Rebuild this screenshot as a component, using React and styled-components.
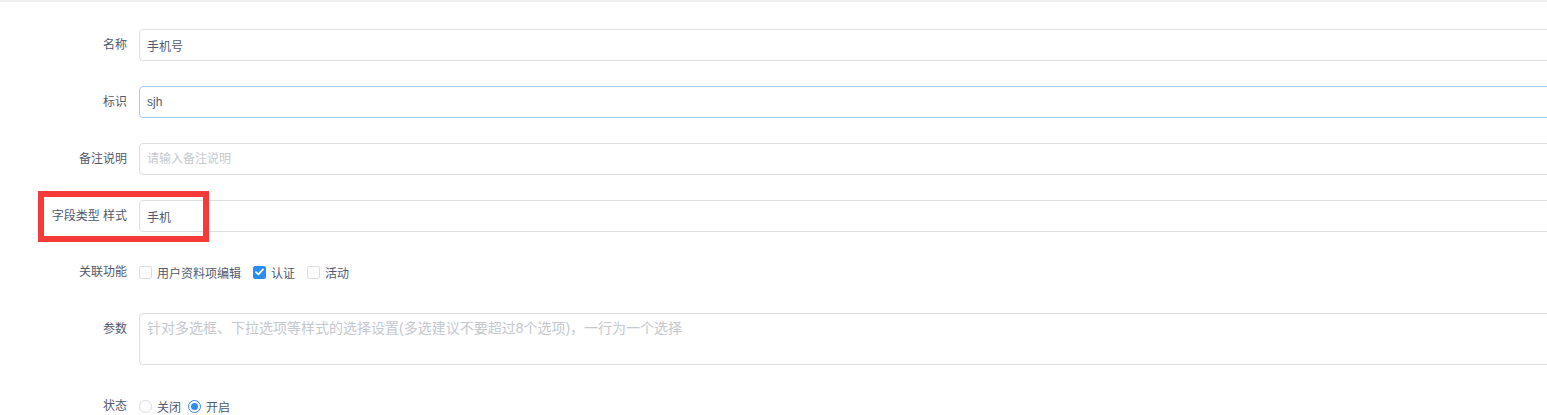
import React from "react";
import styled, { createGlobalStyle } from "styled-components";

const Global = createGlobalStyle`
  html, body { margin: 0; padding: 0; background: #fff; overflow: hidden; }
  body { font-family: "Liberation Sans", "Noto Sans CJK SC", sans-serif; font-size: 12px; color: #515a6e; }
  * { box-sizing: border-box; }
`;

const Page = styled.div`
  width: 100%;
  min-height: 415px;
  border-top: 2px solid #f0f0f0;
  padding-top: 27px;
`;

const Form = styled.div`
  display: flex;
  flex-direction: column;
`;

const Row = styled.div`
  position: relative;
  display: flex;
  align-items: ${(p) => (p.$top ? "flex-start" : "center")};
  gap: 12px;
  height: ${(p) => p.$h || 32}px;
  margin-bottom: ${(p) => (p.$mb !== undefined ? p.$mb : 25)}px;
`;

const Label = styled.label`
  width: 127px;
  flex: none;
  text-align: right;
  line-height: ${(p) => p.$lh || 32}px;
  font-size: 12px;
  color: #515a6e;
`;

const Input = styled.input`
  flex: none;
  width: 1430px;
  height: 32px;
  padding: 0 7px;
  font-family: "Liberation Sans", "Noto Sans CJK SC", sans-serif;
  font-size: 12px;
  color: #515a6e;
  border: 1px solid ${(p) => (p.$focus ? "#a9cbef" : "#dcdee2")};
  border-radius: 4px;
  outline: none;
  background: #fff;
  &::placeholder { color: #c5c8ce; }
`;

const TextArea = styled.textarea`
  flex: none;
  width: 1430px;
  height: 52px;
  padding: 4px 7px;
  font-family: "Liberation Sans", "Noto Sans CJK SC", sans-serif;
  font-size: 14px;
  line-height: 20px;
  color: #515a6e;
  border: 1px solid #dcdee2;
  border-radius: 4px;
  outline: none;
  resize: none;
  &::placeholder { color: #c5c8ce; }
`;

const Options = styled.div`
  display: flex;
  align-items: center;
  gap: ${(p) => p.$gap}px;
`;

const Option = styled.span`
  display: inline-flex;
  align-items: center;
  gap: 5px;
  font-size: 12px;
  color: #515a6e;
`;

const Box = styled.span`
  width: 13px;
  height: 13px;
  border-radius: 2px;
  border: 1px solid ${(p) => (p.$on ? "#2d8cf0" : "#dcdee2")};
  background: ${(p) => (p.$on ? "#2d8cf0" : "#fff")};
  display: inline-flex;
  align-items: center;
  justify-content: center;
`;

const Radio = styled.span`
  width: 13px;
  height: 13px;
  border-radius: 50%;
  border: 1px solid ${(p) => (p.$on ? "#2d8cf0" : "#dcdee2")};
  background: #fff;
  display: inline-flex;
  align-items: center;
  justify-content: center;
  &::after {
    content: "";
    width: 7px;
    height: 7px;
    border-radius: 50%;
    background: ${(p) => (p.$on ? "#2d8cf0" : "transparent")};
  }
`;

const Highlight = styled.div`
  position: absolute;
  left: 38px;
  top: -9px;
  width: 171px;
  height: 51px;
  border: 6px solid #f53a3a;
  pointer-events: none;
`;

const Check = () => (
  <svg width="9" height="8" viewBox="0 0 9 8">
    <path d="M1 4.2 L3.4 6.4 L8 1.4" stroke="#fff" strokeWidth="1.8" fill="none" strokeLinecap="round" strokeLinejoin="round" />
  </svg>
);

const Checkbox = ({ on, children }) => (
  <Option>
    <Box $on={on}>{on && <Check />}</Box>
    {children}
  </Option>
);

const RadioItem = ({ on, children }) => (
  <Option>
    <Radio $on={on} />
    {children}
  </Option>
);

export default function App() {
  return (
    <>
      <Global />
      <Page>
        <Form>
          <Row>
            <Label>名称</Label>
            <Input defaultValue="手机号" readOnly />
          </Row>
          <Row>
            <Label>标识</Label>
            <Input $focus defaultValue="sjh" readOnly />
          </Row>
          <Row>
            <Label>备注说明</Label>
            <Input placeholder="请输入备注说明" readOnly />
          </Row>
          <Row>
            <Label>字段类型 样式</Label>
            <Input defaultValue="手机" readOnly />
            <Highlight />
          </Row>
          <Row $h={30} $mb={26}>
            <Label $lh={30}>关联功能</Label>
            <Options $gap={12}>
              <Checkbox>用户资料项编辑</Checkbox>
              <Checkbox on>认证</Checkbox>
              <Checkbox>活动</Checkbox>
            </Options>
          </Row>
          <Row $top $h={52}>
            <Label>参数</Label>
            <TextArea
              readOnly
              placeholder="针对多选框、下拉选项等样式的选择设置(多选建议不要超过8个选项)，一行为一个选择"
            />
          </Row>
          <Row $mb={0}>
            <Label>状态</Label>
            <Options $gap={7}>
              <RadioItem>关闭</RadioItem>
              <RadioItem on>开启</RadioItem>
            </Options>
          </Row>
        </Form>
      </Page>
    </>
  );
}
